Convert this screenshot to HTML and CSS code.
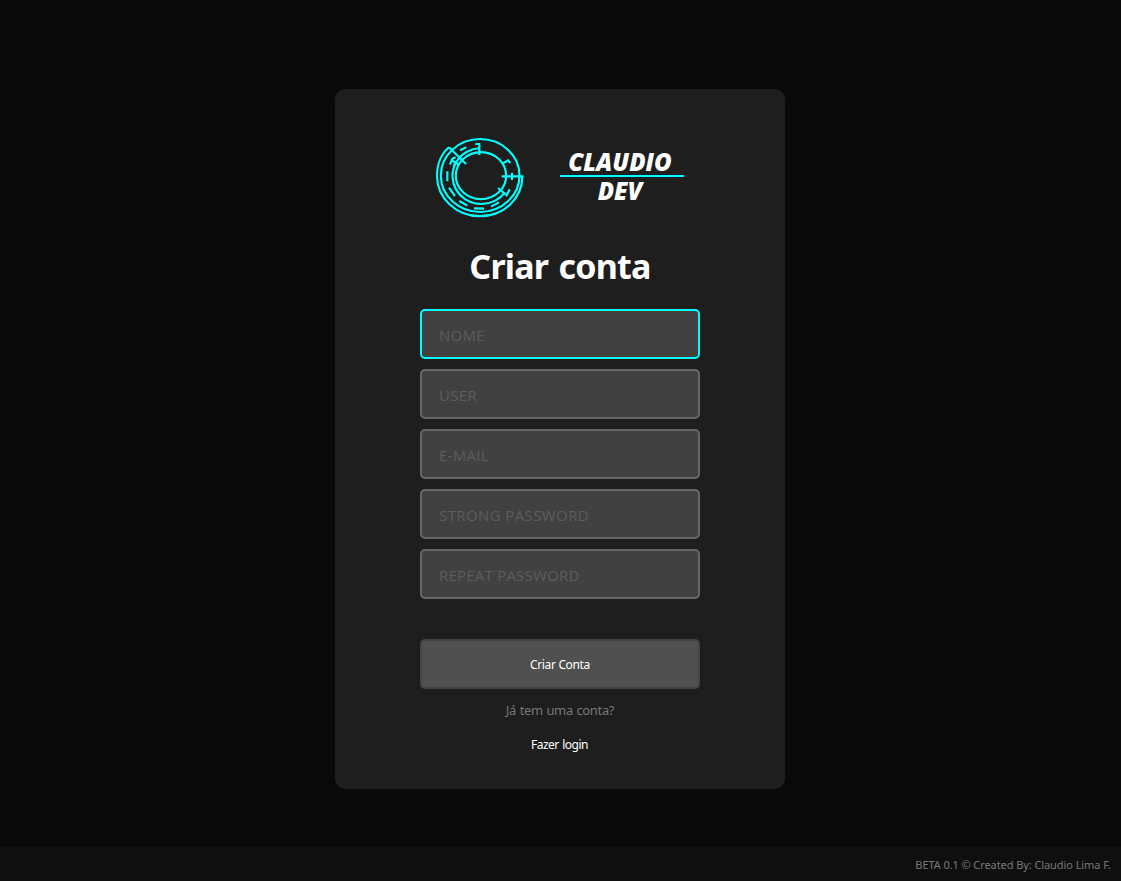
FILE: index.html
```html
<!DOCTYPE html>
<html lang="pt-BR">
<head>
<meta charset="utf-8">
<title>Criar conta</title>
<link rel="stylesheet" href="styles.css">
</head>
<body>
<main class="page">
  <form class="card">
    <header class="brand">
      <svg class="emblem" viewBox="0 0 300 285" aria-hidden="true">
        <ellipse cx="150.500" cy="136.500" rx="118" ry="109.500"/>
        <path d="M57 52C34 70 21 103 21 138C21 205 80 258.500 149 258.500C221 258.500 277 207 277 139H215"/>
        <path d="M57 52L108 102"/>
        <ellipse cx="153" cy="137" rx="75.500" ry="70.500"/>
        <path d="M150 54A87 84 0 1 0 225 187"/>
        <path d="M136 42H148V75M246 128V150M216 102L234 91L241 99M204 174L230 196L239 178M60 104L67 86L77 82M63 90L89 105M79 94L71 108"/>
        <path d="M90 61L109 52M52 124V154M57 173L75 198M88 213L112 227M132 235L162 236M183 230L207 217"/>
      </svg>
      <div class="wordmark"><span class="first">CLAUDIO</span><span class="second">DEV</span></div>
    </header>
    <h1 class="title">Criar conta</h1>
    <div class="fields">
      <input class="field field-active" type="text" placeholder="NOME" aria-label="Nome">
      <input class="field" type="text" placeholder="USER" aria-label="User">
      <input class="field" type="email" placeholder="E-MAIL" aria-label="E-mail">
      <input class="field field-strong" type="password" placeholder="STRONG PASSWORD" aria-label="Strong password">
      <input class="field field-repeat" type="password" placeholder="REPEAT PASSWORD" aria-label="Repeat password">
    </div>
    <button class="submit" type="button">Criar Conta</button>
    <p class="question">Já tem uma conta?</p>
    <a class="login" href="#">Fazer login</a>
  </form>
</main>
<footer class="footer"><span>BETA 0.1 © Created By: Claudio Lima F.</span></footer>
</body>
</html>
```

FILE: styles.css
```css
* { box-sizing: border-box; }
body {
  margin: 0;
  height: 881px;
  display: flex;
  flex-direction: column;
  overflow: hidden;
  background: #090909;
  color: #fff;
  font-family: "Noto Sans", "Open Sans", sans-serif;
}
.page { flex: 1; padding: 89px 1px 0 0; }
.card {
  width: 450px;
  height: 700px;
  margin: 0 auto;
  padding-top: 41px;
  display: flex;
  flex-direction: column;
  align-items: center;
  border-radius: 10px;
  background: #1e1e1e;
}
.brand {
  width: 260px;
  height: 95px;
  display: flex;
  justify-content: space-between;
}
.emblem {
  width: 100px;
  height: 95px;
  fill: none;
  stroke: #00ffff;
  stroke-width: 6.5;
}
.wordmark {
  width: 124px;
  margin-right: 6px;
  padding-top: 18px;
  font: italic 800 24px/27px "Open Sans", sans-serif;
  text-align: center;
}
.wordmark span { display: block; }
.first { height: 29px; padding-right: 4px; border-bottom: 2px solid #00ffff; letter-spacing: 0.05px; }
.second { padding-right: 4px; }
.title {
  margin: 16px 0 0;
  font-size: 34px;
  line-height: 50px;
  font-weight: 700;
  letter-spacing: -0.75px;
  word-spacing: 2px;
}
.fields {
  width: 280px;
  margin-top: 18px;
  display: flex;
  flex-direction: column;
  gap: 10px;
}
.field {
  width: 280px;
  height: 50px;
  padding: 1px 17px 0;
  border: 2px solid #666;
  border-radius: 5px;
  outline: none;
  background: #414141;
  color: #fff;
  font: 15px "Open Sans", sans-serif;
  letter-spacing: 0.3px;
}
.field::placeholder { color: #5c5c5c; opacity: 1; }
.field-active { border-color: #00ffff; }
.field-strong { letter-spacing: 0.4px; }
.field-repeat { letter-spacing: 0.22px; }
.submit {
  width: 280px;
  height: 50px;
  margin-top: 40px;
  border: 2px solid #444;
  border-radius: 5px;
  background: #505050;
  color: #fff;
  font: 12px "Noto Sans", sans-serif;
  letter-spacing: -0.35px;
}
.question {
  margin: 11px 0 0;
  color: #777;
  font-size: 13px;
  line-height: 20px;
  letter-spacing: -0.35px;
  word-spacing: 0.6px;
}
.login {
  margin-top: 15px;
  padding-right: 1px;
  color: #fff;
  font-size: 12px;
  line-height: 20px;
  letter-spacing: -0.5px;
  word-spacing: 0.8px;
  text-decoration: none;
}
.footer {
  height: 34px;
  padding: 1px 10px 0 0;
  display: flex;
  align-items: center;
  justify-content: flex-end;
  background: #0f0f0f;
  color: #777;
  font-size: 11px;
  letter-spacing: -0.08px;
}
```
